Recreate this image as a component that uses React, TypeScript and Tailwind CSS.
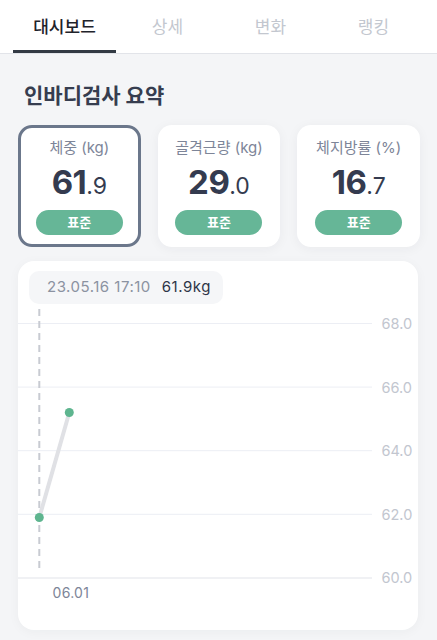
import React from 'react';

const tabs = ['대시보드', '상세', '변화', '랭킹'];

const summary = [
  { label: '체중 (kg)', whole: '61', frac: '.9', active: true },
  { label: '골격근량 (kg)', whole: '29', frac: '.0', active: false },
  { label: '체지방률 (%)', whole: '16', frac: '.7', active: false },
];

// chart scale: 60.0 sits at y=317, 2.0 per 63.6px
const yOf = (v: number) => 316.9 - ((v - 60) / 2) * 63.6;
const ticks = [68, 66, 64, 62, 60];

const WeightChart = () => (
  <div className="relative h-[369px] rounded-[16px] bg-white shadow-[0_2px_12px_rgba(30,40,60,0.04)]">
    <svg className="absolute left-0 top-0" width="400" height="369" viewBox="0 0 400 369">
      {ticks.map((t) => (
        <g key={t}>
          <line x1="0" x2="354" y1={yOf(t)} y2={yOf(t)} stroke={t === 60 ? '#ebecf0' : '#eceef4'} strokeWidth={t === 60 ? 1.5 : 1} />
          <text x="363.5" y={yOf(t)} dominantBaseline="central" fontSize="14.5" fill="#c2c6cf" fontFamily="Inter, sans-serif">
            {t.toFixed(1)}
          </text>
        </g>
      ))}
      <line x1="21.3" x2="21.3" y1="48" y2="311" stroke="#c8cbd2" strokeWidth="2" strokeDasharray="7 5" />
      <line x1="21.3" y1={yOf(61.9)} x2="51.3" y2={yOf(65.2)} stroke="#e0e1e5" strokeWidth="4" strokeLinecap="round" />
      <circle cx="21.3" cy={yOf(61.9)} r="4.5" fill="#5eb58f" />
      <circle cx="51.3" cy={yOf(65.2)} r="4.5" fill="#5eb58f" />
      <text x="34.5" y="331" dominantBaseline="central" fontSize="14" letterSpacing="0.3" fill="#7d8598" fontFamily="Inter, sans-serif">
        06.01
      </text>
    </svg>
    <div className="absolute left-[11px] top-[10px] flex h-[33px] w-[194px] items-center gap-[11px] rounded-[10px] bg-[#f5f6f8] pl-[18px] text-[15px] tracking-[0.5px]">
      <span className="text-[#8b92a1]">23.05.16 17:10</span>
      <span className="text-[#2e3547]">61.9kg</span>
    </div>
  </div>
);

export default function App() {
  return (
    <div className="min-h-screen w-full bg-[#f4f5f7] font-['Inter','Noto_Sans_CJK_KR',sans-serif]">
      <div className="flex h-[54px] border-b border-[#e2e4e9] bg-white pl-[13px] pr-[12px]">
        {tabs.map((tab, i) => (
          <div key={tab} className="relative flex h-[53px] flex-1 items-center justify-center pt-[2px]">
            <span className={i === 0 ? 'text-[17px] font-medium text-[#1f232b]' : 'text-[17px] text-[#c3c7cf]'}>{tab}</span>
            {i === 0 && <div className="absolute bottom-0 left-0 right-0 h-[3px] bg-[#333a44]" />}
          </div>
        ))}
      </div>

      <h2 className="mt-[28px] pl-[24px] text-[21px] font-bold leading-[28px] text-[#363d4f]">인바디검사 요약</h2>

      <div className="mt-[15px] grid grid-cols-3 gap-[17px] pl-[18px] pr-[17px]">
        {summary.map((s) => (
          <div
            key={s.label}
            className={
              s.active
                ? 'flex h-[122px] flex-col items-center rounded-[14px] border-[3px] border-[#6b778b] bg-white pt-[10px]'
                : 'flex h-[122px] flex-col items-center rounded-[14px] border-[3px] border-transparent bg-white pt-[10px] shadow-[0_2px_12px_rgba(30,40,60,0.05)]'
            }
          >
            <div className="text-[15px] leading-[20px] text-[#7d8598]">{s.label}</div>
            <div className="mt-[6px] flex h-[36px] items-baseline leading-[36px] text-[#343b4f]">
              <span className="text-[33px] font-bold tracking-[-0.5px]">{s.whole}</span>
              <span className="text-[23px]">{s.frac}</span>
            </div>
            <div className="mt-[10px] flex h-[25px] w-[87px] items-center justify-center rounded-full bg-[#66b697] text-[13px] font-bold text-white">
              표준
            </div>
          </div>
        ))}
      </div>

      <div className="mt-[14px] pb-[10px] pl-[18px] pr-[19px]">
        <WeightChart />
      </div>
    </div>
  );
}
